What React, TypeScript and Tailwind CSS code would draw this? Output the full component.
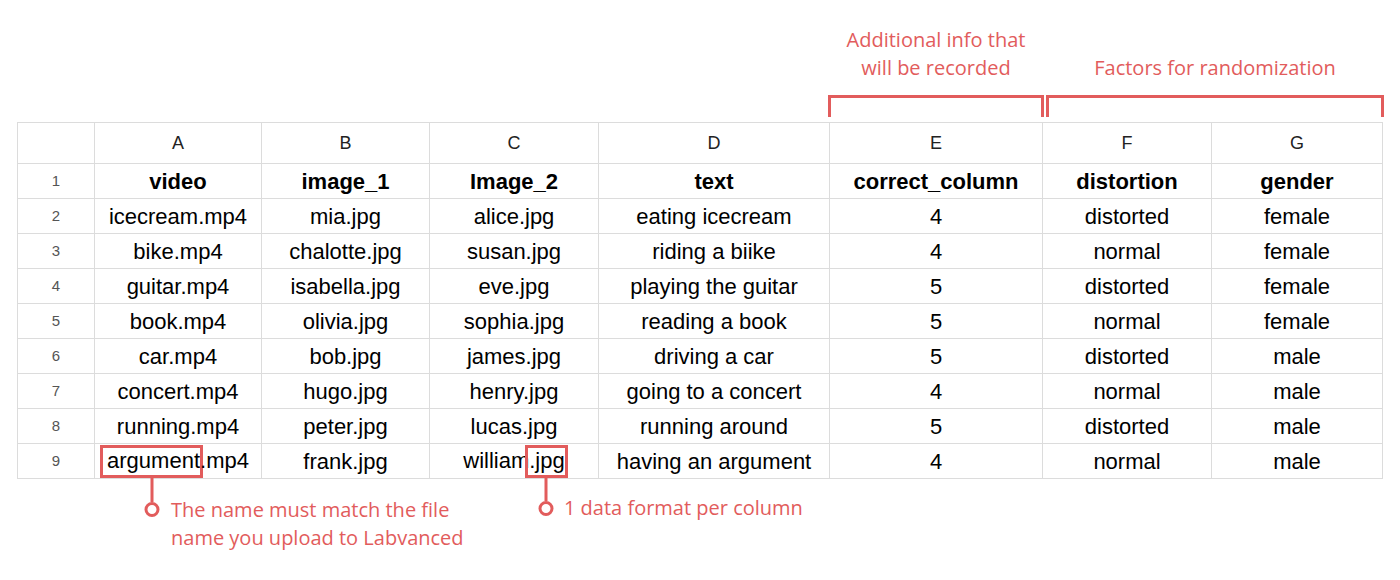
import type { ReactNode } from 'react'

const COLS = 'grid-cols-[77px_167px_168px_169px_231px_213px_169px_171px]'
const RED = '#e25c5c'

const letters = ['A', 'B', 'C', 'D', 'E', 'F', 'G']

const header = ['video', 'image_1', 'Image_2', 'text', 'correct_column', 'distortion', 'gender']

const rows = [
  ['icecream.mp4', 'mia.jpg', 'alice.jpg', 'eating icecream', '4', 'distorted', 'female'],
  ['bike.mp4', 'chalotte.jpg', 'susan.jpg', 'riding a biike', '4', 'normal', 'female'],
  ['guitar.mp4', 'isabella.jpg', 'eve.jpg', 'playing the guitar', '5', 'distorted', 'female'],
  ['book.mp4', 'olivia.jpg', 'sophia.jpg', 'reading a book', '5', 'normal', 'female'],
  ['car.mp4', 'bob.jpg', 'james.jpg', 'driving a car', '5', 'distorted', 'male'],
  ['concert.mp4', 'hugo.jpg', 'henry.jpg', 'going to a concert', '4', 'normal', 'male'],
  ['running.mp4', 'peter.jpg', 'lucas.jpg', 'running around', '5', 'distorted', 'male'],
]

// red box around part of a cell value, with a pin and a note underneath
function Callout({ children, note, boxClass, stemClass, noteClass }: { children: ReactNode; note: ReactNode; boxClass: string; stemClass: string; noteClass: string }) {
  return (
    <span className="relative inline-block">
      {children}
      <span className={`absolute top-[1px] bottom-0 border-[3px] border-[#e25c5c] ${boxClass}`}>
        <span className="absolute left-1/2 top-full -translate-x-1/2 flex flex-col items-center">
          <span className={`w-[3px] bg-[#e25c5c] ${stemClass}`} />
          <span className="relative w-[15px] h-[15px] rounded-full border-[3px] border-[#e25c5c] bg-white">
            <span
              className={`absolute whitespace-nowrap text-left text-[20px] leading-[28px] text-[#e25c5c] font-normal ${noteClass}`}
              style={{ fontFamily: '"Open Sans", "Noto Sans", sans-serif' }}
            >
              {note}
            </span>
          </span>
        </span>
      </span>
    </span>
  )
}

export default function App() {
  return (
    <div className="w-[1400px] h-[580px] bg-white pl-[17px]" style={{ fontFamily: '"Liberation Sans", Arial, sans-serif' }}>
      {/* annotations above the sheet */}
      <div
        className={`grid ${COLS} h-[122px] pb-[5px] pl-[1px] items-end text-[20px] leading-[28px] text-center`}
        style={{ fontFamily: '"Open Sans", "Noto Sans", sans-serif', color: RED }}
      >
        <div className="col-start-6 flex flex-col -ml-[2px] mr-[-1px]">
          <div>Additional info that</div>
          <div>will be recorded</div>
          <div className="mt-[13px] h-[22px] border-t-[3px] border-x-[3px] border-[#e25c5c]" />
        </div>
        <div className="col-span-2 flex flex-col ml-[3px] mr-[-1px]">
          <div>Factors for randomization</div>
          <div className="mt-[13px] h-[22px] border-t-[3px] border-x-[3px] border-[#e25c5c]" />
        </div>
      </div>

      {/* sheet */}
      <div className={`grid ${COLS} w-max border-l border-t border-[#dcdcdc] text-black`}>
        <div className="h-[41px] border-r border-b border-[#dcdcdc]" />
        {letters.map((l) => (
          <div key={l} className="h-[41px] border-r border-b border-[#dcdcdc] flex items-center justify-center text-[18px] text-[#222]">
            {l}
          </div>
        ))}

        <div className="h-[35px] border-r border-b border-[#dcdcdc] flex items-center justify-center text-[15px] text-[#555]">1</div>
        {header.map((h) => (
          <div key={h} className="h-[35px] border-r border-b border-[#dcdcdc] flex items-center justify-center text-[22px] font-bold">
            {h}
          </div>
        ))}

        {rows.map((r, i) => (
          <div key={i} className="contents">
            <div className="h-[35px] border-r border-b border-[#dcdcdc] flex items-center justify-center text-[15px] text-[#555]">
              {i + 2}
            </div>
            {r.map((c, j) => (
              <div key={j} className="h-[35px] border-r border-b border-[#dcdcdc] flex items-center justify-center text-[22px]">
                {c}
              </div>
            ))}
          </div>
        ))}

        <div className="h-[35px] border-r border-b border-[#dcdcdc] flex items-center justify-center text-[15px] text-[#555]">9</div>
        <div className="h-[35px] border-r border-b border-[#dcdcdc] flex items-center justify-center text-[22px] leading-[34px]">
          <Callout
            boxClass="-left-[7px] -right-[3px]"
            stemClass="h-[27px]"
            noteClass="left-[24px] top-[-9px]"
            note={
              <>
                The name must match the file
                <br />
                name you upload to Labvanced
              </>
            }
          >
            argument
          </Callout>
          <span className="relative z-10">.</span>mp4
        </div>
        <div className="h-[35px] border-r border-b border-[#dcdcdc] flex items-center justify-center text-[22px]">frank.jpg</div>
        <div className="h-[35px] border-r border-b border-[#dcdcdc] flex items-center justify-center text-[22px] leading-[34px]">
          william
          <Callout boxClass="-left-[4px] -right-[3px]" stemClass="h-[26px]" noteClass="left-[22px] top-[-10px]" note="1 data format per column">
            .jpg
          </Callout>
        </div>
        <div className="h-[35px] border-r border-b border-[#dcdcdc] flex items-center justify-center text-[22px]">having an argument</div>
        <div className="h-[35px] border-r border-b border-[#dcdcdc] flex items-center justify-center text-[22px]">4</div>
        <div className="h-[35px] border-r border-b border-[#dcdcdc] flex items-center justify-center text-[22px]">normal</div>
        <div className="h-[35px] border-r border-b border-[#dcdcdc] flex items-center justify-center text-[22px]">male</div>
      </div>
    </div>
  )
}
